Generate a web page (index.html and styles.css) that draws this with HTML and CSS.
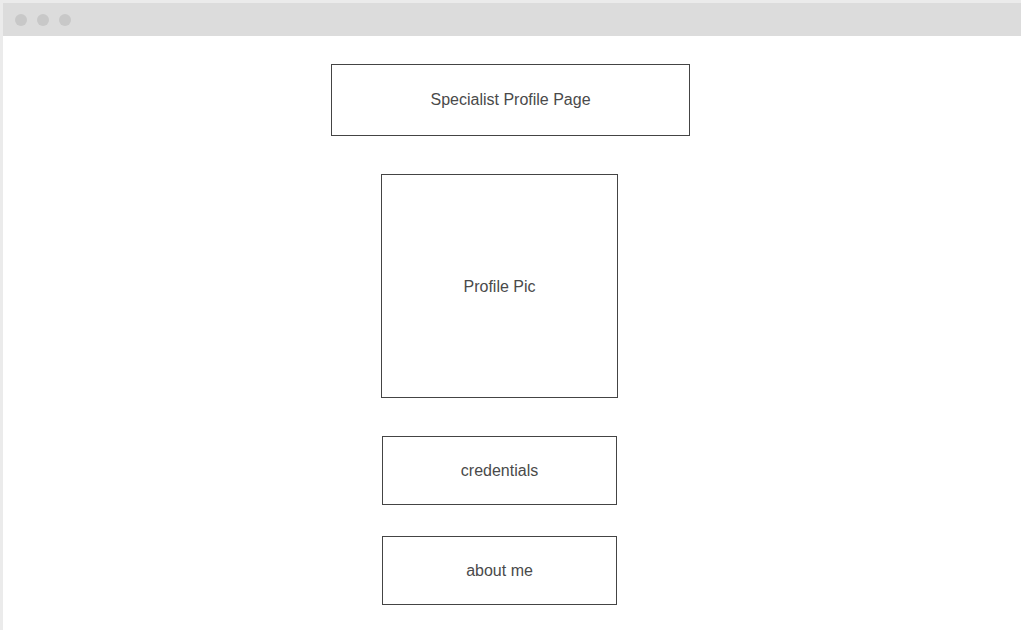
FILE: index.html
```html
<!DOCTYPE html>
<html>
<head>
<meta charset="utf-8">
<link rel="stylesheet" href="styles.css">
</head>
<body>
<div class="window">
  <div class="titlebar">
    <span class="dot"></span><span class="dot"></span><span class="dot"></span>
  </div>
  <div class="content">
    <div class="box header">Specialist Profile Page</div>
    <div class="box pic">Profile Pic</div>
    <div class="box cred">credentials</div>
    <div class="box about">about me</div>
  </div>
</div>
</body>
</html>
```

FILE: styles.css
```css
html, body {
  margin: 0;
  padding: 0;
  background: #ebebeb;
  width: 1021px;
  height: 630px;
  overflow: hidden;
}
.window {
  margin: 3px 0 0 3px;
  height: 627px;
  background: #ffffff;
  display: flex;
  flex-direction: column;
}
.titlebar {
  height: 33px;
  background: #dcdcdc;
  display: flex;
  align-items: center;
  gap: 10px;
  padding-left: 12px;
  flex-shrink: 0;
}
.dot {
  width: 12px;
  height: 12px;
  border-radius: 50%;
  background: #c8c8c8;
}
.content {
  display: flex;
  flex-direction: column;
  align-items: flex-start;
  padding-top: 28px;
}
.box {
  box-sizing: border-box;
  border: 1px solid #444444;
  display: flex;
  align-items: center;
  justify-content: center;
  font-family: "Liberation Sans", Arial, sans-serif;
  font-size: 16px;
  line-height: 18px;
  color: #4a4a4a;
}
.header {
  margin-left: 328px;
  width: 359px;
  height: 72px;
  padding-bottom: 1px;
}
.pic {
  margin-left: 378px;
  margin-top: 38px;
  width: 237px;
  height: 224px;
  padding-top: 1px;
}
.cred {
  margin-left: 379px;
  margin-top: 38px;
  width: 235px;
  height: 69px;
}
.about {
  margin-left: 379px;
  margin-top: 31px;
  width: 235px;
  height: 69px;
}
```
